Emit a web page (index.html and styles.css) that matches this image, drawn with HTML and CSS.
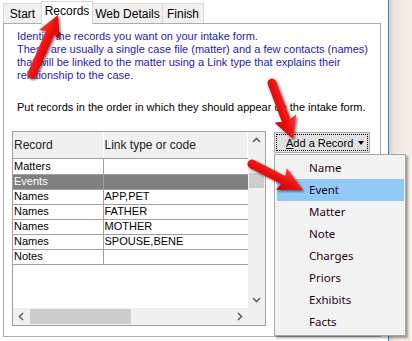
FILE: index.html
```html
<!DOCTYPE html>
<html lang="en">
<head>
    <meta charset="UTF-8">
    <title>Intake Form - Records</title>
    <link rel="stylesheet" href="styles.css">
</head>
<body>
<div class="window">
    <div class="form">
        <!-- Tab strip -->
        <div class="tabs">
            <div class="tab tab-start">Start</div>
            <div class="tab tab-records active">Records</div>
            <div class="tab tab-web">Web Details</div>
            <div class="tab tab-finish">Finish</div>
        </div>

        <div class="page">
            <p class="intro">Identify the records you want on your intake form.<br>These are usually a single case file (matter) and a few contacts (names)<br>that will be linked to the matter using a Link type that explains their<br>relationship to the case.</p>
            <p class="order">Put records in the order in which they should appear on the intake form.</p>

            <div class="work">
                <!-- Records grid -->
                <div class="grid">
                    <div class="grid-body">
                        <table class="records">
                            <thead>
                                <tr><th class="col-rec">Record</th><th>Link type or code</th></tr>
                            </thead>
                            <tbody>
                                <tr class="first"><td>Matters</td><td></td></tr>
                                <tr class="selected"><td>Events</td><td></td></tr>
                                <tr><td>Names</td><td>APP,PET</td></tr>
                                <tr><td>Names</td><td>FATHER</td></tr>
                                <tr><td>Names</td><td>MOTHER</td></tr>
                                <tr><td>Names</td><td>SPOUSE,BENE</td></tr>
                                <tr><td>Notes</td><td></td></tr>
                            </tbody>
                        </table>
                        <div class="vscroll">
                            <svg class="chev up" width="17" height="17" viewBox="0 0 17 17"><polyline points="5,10 8.5,6.5 12,10" /></svg>
                            <div class="vthumb"></div>
                            <svg class="chev down" width="17" height="17" viewBox="0 0 17 17"><polyline points="5,7 8.5,10.5 12,7" /></svg>
                        </div>
                    </div>
                    <div class="hbar">
                        <div class="hscroll">
                            <svg class="chev" width="17" height="17" viewBox="0 0 17 17"><polyline points="10,5 6.5,8.5 10,12" /></svg>
                            <div class="hthumb"></div>
                            <svg class="chev right" width="17" height="17" viewBox="0 0 17 17"><polyline points="7,5 10.5,8.5 7,12" /></svg>
                        </div>
                        <div class="corner"></div>
                    </div>
                </div>

                <!-- Add a Record dropdown -->
                <div class="add">
                    <button class="add-btn"><span class="focus"><span class="label"><u>A</u>dd a Record</span><span class="caret"></span></span></button>
                    <ul class="menu">
                        <li>Name</li>
                        <li class="hover">Event</li>
                        <li>Matter</li>
                        <li>Note</li>
                        <li>Charges</li>
                        <li>Priors</li>
                        <li>Exhibits</li>
                        <li>Facts</li>
                    </ul>
                </div>
            </div>
        </div>
    </div>
    <div class="edge"></div>
    <div class="desk"></div>
</div>

<!-- Red callout arrows -->
<svg class="arrows" width="412" height="341" viewBox="0 0 412 341">
    <defs>
        <filter id="shadow" x="-30%" y="-30%" width="160%" height="160%">
            <feDropShadow dx="1.5" dy="1.5" stdDeviation="1.2" flood-color="#000" flood-opacity="0.55"/>
        </filter>
        <linearGradient id="red" x1="0" y1="0" x2="0" y2="1">
            <stop offset="0" stop-color="#ff3a3a"/>
            <stop offset="0.5" stop-color="#ee1111"/>
            <stop offset="1" stop-color="#c40000"/>
        </linearGradient>
    </defs>
    <g filter="url(#shadow)" fill="url(#red)">
        <path transform="translate(32,74) rotate(-66.2)" d="M0,-4.5 L45,-4.5 L43,-11.5 L64.5,0 L43,11.5 L45,4.5 L0,4.5 A4.5,4.5 0 0 1 0,-4.5 Z"/>
        <path transform="translate(272,83) rotate(69.4)" d="M0,-4.5 L40,-4.5 L38,-11.5 L60,0 L38,11.5 L40,4.5 L0,4.5 A4.5,4.5 0 0 1 0,-4.5 Z"/>
        <path transform="translate(252,164) rotate(27)" d="M0,-4.5 L35,-4.5 L33,-12 L57,0 L33,12 L35,4.5 L0,4.5 A4.5,4.5 0 0 1 0,-4.5 Z"/>
    </g>
</svg>
</body>
</html>
```

FILE: styles.css
```css
* {
    box-sizing: border-box;
}
body {
    margin: 0;
    width: 412px;
    height: 341px;
    overflow: hidden;
    position: relative;
    background-color: #fff;
    font-family: "Liberation Sans", Arial, sans-serif;
    font-size: 11px;
    color: #000;
}
.window {
    display: flex;
    height: 341px;
}
.form {
    width: 388px;
    padding: 1px 0 0 3px;
    background-color: #fff;
}
.edge {
    width: 1px;
    background-color: #2b88d8;
}
.desk {
    flex: 1;
    background: linear-gradient(to right, #d8d0c6, #ede6dd 5px, #f5efe8);
}

/* tabs */
.tabs {
    display: flex;
    align-items: flex-end;
    height: 23px;
    margin-bottom: -1px;
    position: relative;
    z-index: 1;
}
.tab {
    height: 20px;
    margin-bottom: 1px;
    margin-left: -1px;
    padding-top: 3px;
    border: 1px solid #d9d9d9;
    border-bottom: none;
    background-color: #f0f0f0;
    text-align: center;
    font-size: 12px;
}
.tab-start {
    margin-left: 0;
    width: 39px;
}
.tab-records {
    width: 52px;
}
.tab-web {
    width: 71px;
}
.tab-finish {
    width: 42px;
}
.tab.active {
    height: 23px;
    margin-bottom: 0;
    padding-top: 2px;
    background-color: #fff;
    position: relative;
}

/* tab page */
.page {
    width: 378px;
    height: 314px;
    border: 1px solid #acacac;
    background-color: #fff;
}
.intro, .order {
    margin: 0;
    padding-left: 13px;
    line-height: 13px;
}
.intro {
    padding-top: 6px;
    color: #1c1cb4;
}
.order {
    margin-top: 19px;
}
.work {
    display: flex;
    align-items: flex-start;
    gap: 8px;
    margin: 17px 0 0 8px;
}

/* grid */
.grid {
    width: 254px;
    height: 195px;
    border: 1px solid #a0a0a0;
    background-color: #fff;
}
.grid-body {
    display: flex;
    height: 176px;
}
.records {
    width: 235px;
    border-collapse: collapse;
    align-self: flex-start;
    table-layout: fixed;
}
.records th {
    height: 26px;
    padding: 0 0 0 1px;
    background-color: #f0f0f0;
    border-bottom: 1px solid #a0a0a0;
    border-right: 1px solid #fff;
    font-weight: normal;
    text-align: left;
    color: #222;
    font-size: 12px;
}
.records th.col-rec {
    width: 90px;
}
.records td {
    height: 15px;
    padding: 0 0 0 1px;
    border-bottom: 1px solid #a0a0a0;
    border-right: 1px solid #a0a0a0;
    line-height: 13px;
    white-space: nowrap;
}
.records td:last-child {
    border-right: none;
}
.records tr.first td {
    height: 16px;
}
.records tr.selected td {
    background-color: #808080;
    color: #fff;
}
.vscroll {
    width: 17px;
    background-color: #f0f0f0;
    position: relative;
}
.vthumb {
    position: absolute;
    left: 1px;
    top: 41px;
    width: 15px;
    height: 15px;
    background-color: #cdcdcd;
}
.chev {
    display: block;
}
.chev polyline {
    fill: none;
    stroke: #606060;
    stroke-width: 1.6;
}
.chev.down {
    position: absolute;
    bottom: 0;
    left: 0;
}
.hbar {
    display: flex;
    height: 17px;
}
.hscroll {
    width: 235px;
    display: flex;
    align-items: center;
    background-color: #f0f0f0;
}
.hthumb {
    width: 101px;
    height: 15px;
    background-color: #cdcdcd;
}
.chev.right {
    margin-left: auto;
}
.corner {
    flex: 1;
    background-color: #f0f0f0;
}

/* dropdown button and menu */
.add {
    position: relative;
    margin-top: 1px;
}
.add-btn {
    display: block;
    width: 96px;
    height: 21px;
    padding: 1px;
    border: 1px solid #adadad;
    background-color: #e1e1e1;
    font-family: inherit;
    font-size: 11px;
    color: #000;
}
.focus {
    display: flex;
    align-items: center;
    height: 17px;
    padding-left: 9px;
    border: 1px dotted #000;
}
.label {
    white-space: nowrap;
}
.caret {
    margin-left: auto;
    margin-right: 3px;
    border-left: 3.5px solid transparent;
    border-right: 3.5px solid transparent;
    border-top: 4px solid #000;
}
.menu {
    position: absolute;
    top: 22px;
    left: 0;
    z-index: 2;
    width: 132px;
    margin: 0;
    padding: 2px 1px 2px 2px;
    list-style: none;
    border: 1px solid #a8a8a8;
    background-color: #f2f2f2;
    box-shadow: 2px 2px 2px rgba(0, 0, 0, 0.35);
    font-family: "Noto Sans", sans-serif;
    font-size: 11.5px;
    color: #2a0018;
}
.menu li {
    height: 22px;
    line-height: 22px;
    padding-left: 32px;
}
.menu li.hover {
    background-color: #91c9f7;
}

.arrows {
    position: absolute;
    left: 0;
    top: 0;
    pointer-events: none;
    z-index: 5;
}
```
